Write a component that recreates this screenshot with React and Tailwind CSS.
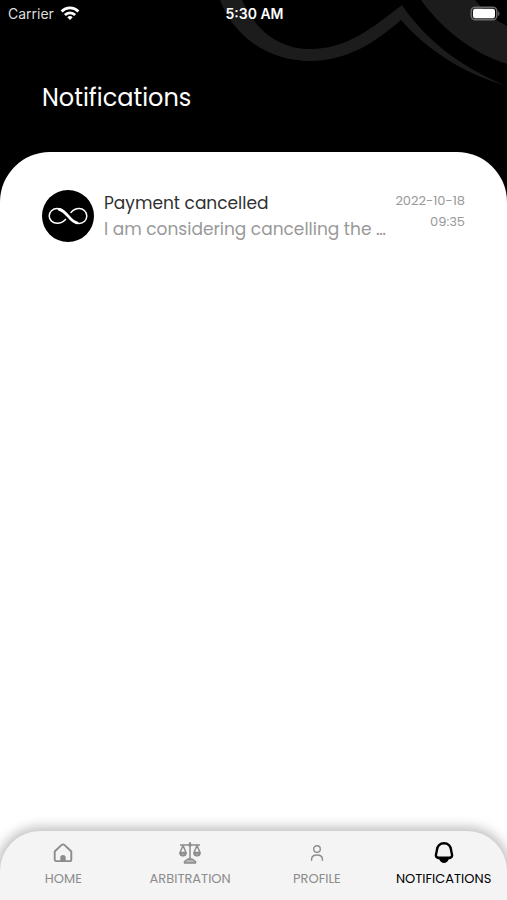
// App.jsx
import clsx from 'clsx'

function WifiIcon() {
  return (
    <svg className="w-5 h-4" viewBox="0 0 20 16" fill="none" stroke="currentColor" strokeWidth="2.8" aria-hidden="true">
      <path d="M1.6 5.4a12 12 0 0 1 16.8 0" />
      <path d="M4.9 8.9a7.2 7.2 0 0 1 10.2 0" />
      <path d="M10 14l-2.7-2.8a3.9 3.9 0 0 1 5.4 0z" fill="currentColor" stroke="none" />
    </svg>
  )
}

function BatteryIcon() {
  return (
    <svg className="w-8 h-4" viewBox="0 0 32 16" aria-hidden="true">
      <rect x="2.2" y="1.2" width="25.6" height="12.6" rx="4" fill="none" stroke="#6b6b6b" strokeWidth="1.5" />
      <rect x="4" y="2.8" width="22" height="9.4" rx="2.2" fill="#fff" />
      <path d="M29.2 5.2c1.7.5 1.7 4.3 0 4.8z" fill="#6b6b6b" />
    </svg>
  )
}

function InfinityMark() {
  return (
    <svg className="w-10 h-6" viewBox="0 0 40 24" fill="none" stroke="#fff" strokeLinecap="round" aria-hidden="true">
      <path
        strokeWidth="1.5"
        d="M17.5 15.4C15.5 17.6 13 19.2 9.2 19.2C4.600 19.200 1.200 16 1.200 12S4.600 4.600 9.200 4.600C14.500 4.600 17.200 8.200 20.200 12S26 19.400 31 19.400C35.500 19.400 38.800 16.200 38.800 12S35.500 4.600 31 4.600C27.500 4.600 25 6.200 23 8.400"
      />
      <path strokeWidth="2.8" d="M11 5.300C15 6.200 17.500 9 20.200 12.200C22.800 15.400 25.200 18 29 18.900" />
    </svg>
  )
}

function HeaderArt() {
  return (
    <svg className="absolute top-0 right-0 w-[300px] h-[100px]" viewBox="0 0 300 100" fill="#1c1c1c" aria-hidden="true">
      <path d="M13 0C27 37 62 61 103 61C141 61 170 41 194 20C218 48 256 74 300 86C260 70 221 44 195 5C165 28 140 49 103 49C72 49 48 30 35 0z" />
      <path d="M214 0C235 29 265 53 300 64V26C288 20 277 11 268 0z" />
    </svg>
  )
}

function HomeIcon() {
  return (
    <svg className="w-5 h-5" viewBox="0 0 20 20" fill="none" stroke="currentColor" strokeWidth="1.9" strokeLinejoin="round" aria-hidden="true">
      <path d="M1.700 8.500L8.600 1.900Q10 .9 11.400 1.900L18.300 8.500V16.500Q18.300 18.100 16.700 18.100H3.300Q1.700 18.100 1.700 16.500z" />
      <path d="M7.300 18v-3.200a2.700 2.700 0 0 1 5.400 0V18z" fill="currentColor" stroke="none" />
    </svg>
  )
}

function ScalesIcon() {
  return (
    <svg className="w-6 h-6" viewBox="0 0 24 24" fill="none" stroke="currentColor" strokeWidth="1.5" strokeLinejoin="round" aria-hidden="true">
      <path d="M12 1v18M2 4h20" />
      <circle cx="12" cy="4" r="1.700" fill="currentColor" stroke="none" />
      <path d="M5 4.500L2 11.500a3 3 0 0 0 6 0zM19 4.500l-3 7a3 3 0 0 0 6 0zM2 11.500h6M16 11.500h6" />
      <path d="M2.200 12h5.600a2.800 2.800 0 0 1-5.600 0zM16.200 12h5.600a2.800 2.800 0 0 1-5.600 0z" fill="currentColor" fillOpacity="0.5" />
      <path d="M6.500 22v-1.500L10 18h4l3.500 2.500V22z" fill="currentColor" fillOpacity="0.6" />
    </svg>
  )
}

function ProfileIcon() {
  return (
    <svg className="w-4 h-4" viewBox="0 0 16 16" fill="none" stroke="currentColor" strokeWidth="1.400" strokeLinecap="round" aria-hidden="true">
      <circle cx="8" cy="4" r="3.300" />
      <path d="M2.600 15.300v-1C2.600 11.700 4.800 10 8 10s5.400 1.700 5.400 4.300v1" />
    </svg>
  )
}

function BellIcon() {
  return (
    <svg className="w-6 h-6" viewBox="0 0 24 24" aria-hidden="true">
      <path
        d="M12 2.300C8 2.300 5.300 5.200 4.900 9C4.700 11.500 3.900 12.700 3.900 14.300C3.900 16 5.200 16.800 7 16.800h10c1.800 0 3.100-.8 3.100-2.500 0-1.600-.8-2.800-1-5.300C18.700 5.200 16 2.300 12 2.300z"
        fill="none"
        stroke="currentColor"
        strokeWidth="2.400"
      />
      <path d="M4 16h16c-.5 1.700-1.800 2.300-3.400 2.500C15.800 20.800 14 22 12 22s-3.800-1.200-4.600-3.500C5.800 18.300 4.500 17.700 4 16z" fill="currentColor" />
    </svg>
  )
}

const tabs = [
  { label: 'HOME', icon: HomeIcon },
  { label: 'ARBITRATION', icon: ScalesIcon },
  { label: 'PROFILE', icon: ProfileIcon },
  { label: 'NOTIFICATIONS', icon: BellIcon, active: true },
]

const notifications = [
  {
    id: 1,
    title: 'Payment cancelled',
    message: 'I am considering cancelling the …',
    date: '2022-10-18',
    time: '09:35',
  },
]

function NotificationItem({ item }) {
  return (
    <li className="flex items-start gap-2.5">
      <div className="shrink-0 w-[52px] h-[52px] rounded-full bg-black flex items-center justify-center">
        <InfinityMark />
      </div>
      <div className="flex-1 min-w-0 text-[17px] leading-[26px]">
        <h2 className="text-[#303030] truncate">{item.title}</h2>
        <p className="text-[#999999] whitespace-nowrap">{item.message}</p>
      </div>
      <div className="shrink-0 text-right text-[13px] leading-[21px] text-[#999999]">
        <p>{item.date}</p>
        <p>{item.time}</p>
      </div>
    </li>
  )
}

export default function App() {
  return (
    <div className="min-h-screen flex flex-col bg-black font-['Poppins','Inter',sans-serif]">
      {/* Header */}
      <header className="relative text-white">
        <HeaderArt />
        <div className="relative grid grid-cols-3 items-center h-7 pl-2 pr-1.5 text-sm font-['Inter',sans-serif]">
          <div className="flex items-center gap-1.5 text-[#dddddd]">
            <span>Carrier</span>
            <span className="text-white"><WifiIcon /></span>
          </div>
          <span className="text-center font-semibold">5:30 AM</span>
          <div className="flex justify-end">
            <BatteryIcon />
          </div>
        </div>
        <h1 className="relative pt-[54px] pb-[38px] px-[42px] text-2xl">Notifications</h1>
      </header>

      {/* Content */}
      <div className="flex-1 flex flex-col bg-white rounded-t-[50px] overflow-hidden">
        <main className="flex-1 px-[42px] pt-[38px]">
          <ul>
            {notifications.map((item) => (
              <NotificationItem key={item.id} item={item} />
            ))}
          </ul>
        </main>

        {/* Bottom tabs */}
        <nav className="grid grid-cols-4 h-[69px] rounded-t-[40px] bg-[#f4f4f4] shadow-[0_0_12px_4px_rgba(0,0,0,0.25)]">
          {tabs.map(({ label, icon: Icon, active }) => (
            <a
              key={label}
              href="#"
              aria-current={active ? 'page' : undefined}
              className={clsx(
                'flex flex-col items-center gap-0.5 pt-2 text-[13px] leading-5',
                active ? 'text-black' : 'text-[#8c8c8c]'
              )}
            >
              <span className="flex items-center justify-center h-7">
                <Icon />
              </span>
              {label}
            </a>
          ))}
        </nav>
      </div>
    </div>
  )
}
